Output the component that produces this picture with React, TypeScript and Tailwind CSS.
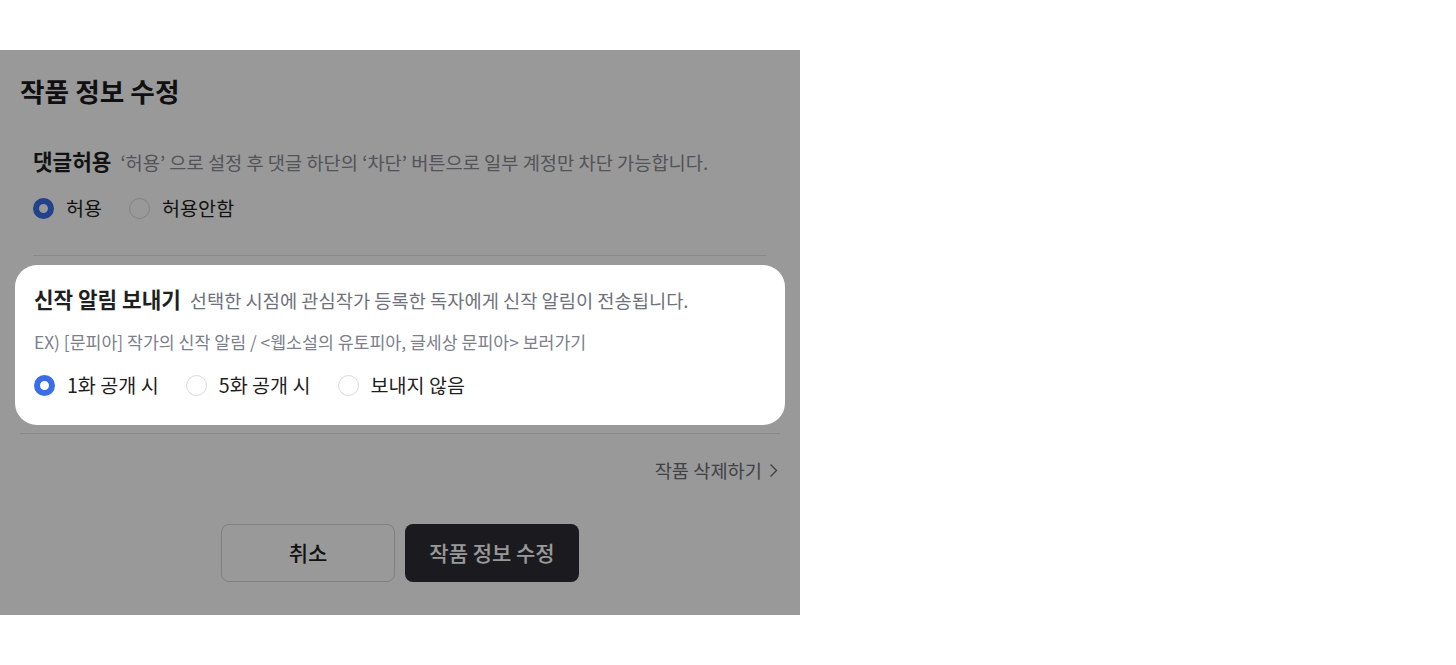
import React from 'react';

const font = { fontFamily: '"Noto Sans CJK KR", "Noto Sans", sans-serif' };

function Radio({ checked, label }: { checked?: boolean; label: string }) {
  return (
    <label className="flex items-center gap-3 h-7">
      {checked ? (
        <span className="h-[21px] w-[21px] rounded-full border-[6px] border-[#3a6ee8] bg-white" />
      ) : (
        <span className="h-[21px] w-[21px] rounded-full border border-[#d9d9de] bg-white" />
      )}
      <span className="text-[19.6px] text-[#1f1f22] leading-7">{label}</span>
    </label>
  );
}

export default function App() {
  return (
    <div className="min-h-[665px] bg-white" style={font}>
      <div className="h-[50px]" />
      <div className="relative w-[800px] h-[565px] bg-white flex flex-col">
        <h2 className="px-5 pt-[23px] text-[26.7px] font-bold leading-9 text-[#1b1b1f]">작품 정보 수정</h2>

        <section className="mx-[33px] mr-[34px] pt-[38px] pb-[33px] border-b border-[#e5e5ea]">
          <div className="flex items-baseline gap-[9px] leading-7">
            <span className="text-[21.3px] font-bold text-[#1f1f22]">댓글허용</span>
            <span className="text-[18.7px] text-[#8a8b93]">‘허용’ 으로 설정 후 댓글 하단의 ‘차단’ 버튼으로 일부 계정만 차단 가능합니다.</span>
          </div>
          <div className="mt-[18px] flex gap-[27px]">
            <Radio checked label="허용" />
            <Radio label="허용안함" />
          </div>
        </section>

        {/* highlighted section sits above the dim layer */}
        <section className="relative z-10 mx-[15px] mt-[9px] rounded-[22px] bg-white px-[19px] pt-5 pb-[26px]">
          <div className="flex items-baseline gap-[9px] leading-7">
            <span className="text-[21.3px] font-bold text-[#1f1f22]">신작 알림 보내기</span>
            <span className="text-[18.7px] text-[#6f727c]">선택한 시점에 관심작가 등록한 독자에게 신작 알림이 전송됩니다.</span>
          </div>
          <p className="mt-[16px] text-[17.3px] leading-6 text-[#7d808a]">
            EX) [문피아] 작가의 신작 알림 / &lt;웹소설의 유토피아, 글세상 문피아&gt; 보러가기
          </p>
          <div className="mt-[17px] flex gap-[27px]">
            <Radio checked label="1화 공개 시" />
            <Radio label="5화 공개 시" />
            <Radio label="보내지 않음" />
          </div>
        </section>

        <div className="mx-5 mt-2 border-b border-[#e5e5ea]" />

        <div className="mt-[23px] pr-[22px] flex justify-end">
          <button className="flex items-center gap-[7px] text-[18.7px] leading-[26px] text-[#6d6e76]">
            작품 삭제하기
            <svg width="9" height="15" viewBox="0 0 9 15" fill="none">
              <path d="M1.5 1.5L7.5 7.5L1.5 13.5" stroke="#6d6e76" strokeWidth="1.4" />
            </svg>
          </button>
        </div>

        <div className="mt-[41px] flex justify-center gap-[10px]">
          <button className="h-[58px] w-[174px] rounded-lg border border-[#d6d6db] bg-white text-[21px] font-medium text-[#1f1f22]">
            취소
          </button>
          <button className="h-[58px] w-[174px] rounded-lg bg-[#2d2e34] text-[21px] font-medium text-white">
            작품 정보 수정
          </button>
        </div>

        <div className="absolute inset-0 bg-black/40" />
      </div>
    </div>
  );
}
